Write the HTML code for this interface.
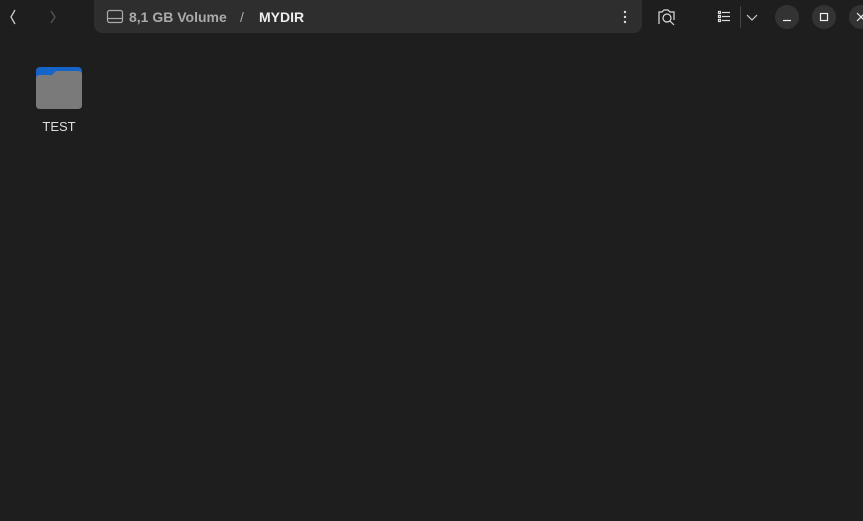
<!DOCTYPE html>
<html><head><style>
body{margin:0;width:863px;height:521px;background:#1e1e1e;overflow:hidden;font-family:"Liberation Sans",sans-serif;position:relative}
.a{position:absolute}
.bar{left:94px;top:0;width:548px;height:33px;background:#2e2e2e;border-radius:0 0 8px 8px}
</style></head><body>
<svg class="a" style="left:0;top:0" width="863" height="40">
<path d="M15 10 L11 17 L15 24" stroke="#ccc" stroke-width="1.3" fill="none"/>
<path d="M51 11 L55 17 L51 23" stroke="#555" stroke-width="1.3" fill="none"/>
</svg>
<div class="a bar"></div>
<svg class="a" style="left:0;top:0" width="863" height="40">
<rect x="107.5" y="10.5" width="15" height="12" rx="2" stroke="#aaa" fill="none" stroke-width="1.2"/>
<line x1="108" y1="18.5" x2="122" y2="18.5" stroke="#aaa" stroke-width="1.2"/>
<circle cx="625" cy="12" r="1.2" fill="#ddd"/><circle cx="625" cy="17" r="1.2" fill="#ddd"/><circle cx="625" cy="22" r="1.2" fill="#ddd"/>
<path d="M659 24 V12 h3 l2-2 h4 l2 2 h4 v8" stroke="#ddd" fill="none" stroke-width="1.2"/>
<circle cx="667" cy="18" r="4" stroke="#ddd" fill="none" stroke-width="1.2"/>
<line x1="670" y1="21" x2="674" y2="25" stroke="#ddd" stroke-width="1.2"/>
<g stroke="#ddd" stroke-width="1.2"><rect x="718.5" y="11.5" width="2" height="2" fill="none"/><rect x="718.5" y="15.5" width="2" height="2" fill="none"/><rect x="718.5" y="19.5" width="2" height="2" fill="none"/>
<line x1="722" y1="12.5" x2="730" y2="12.5"/><line x1="722" y1="16.5" x2="730" y2="16.5"/><line x1="722" y1="20.5" x2="730" y2="20.5"/></g>
<line x1="740.5" y1="6" x2="740.5" y2="28" stroke="#444"/>
<path d="M747 15 L752 20 L757 15" stroke="#ccc" fill="none" stroke-width="1.2"/>
<circle cx="787" cy="17" r="12" fill="#333"/><circle cx="824" cy="17" r="12" fill="#333"/><circle cx="861" cy="17" r="12" fill="#333"/>
<line x1="783" y1="20.5" x2="791" y2="20.5" stroke="#eee" stroke-width="1.2"/>
<rect x="820.5" y="13.5" width="7" height="7" stroke="#eee" fill="none" stroke-width="1.2"/>
<path d="M857 13 L865 21 M865 13 L857 21" stroke="#eee" stroke-width="1.2"/>
</svg>
<svg class="a" style="left:0;top:0" width="120" height="120">
<rect x="36" y="67" width="46" height="38" rx="4" fill="#1565c8"/>
<path d="M36 79 Q36 75 40 75 H52 L56 71 H78 Q82 71 82 75 V105 Q82 109 78 109 H40 Q36 109 36 105 Z" fill="#7a7a7a"/>
</svg>
<div class="a" style="left:129px;top:9px;font-size:14px;color:#aaa;font-weight:bold">8,1 GB Volume</div>
<div class="a" style="left:240px;top:9px;font-size:14px;color:#aaa">/</div>
<div class="a" style="left:259px;top:9px;font-size:14px;color:#eee;font-weight:bold">MYDIR</div>
<div class="a" style="left:30px;width:58px;text-align:center;top:119px;font-size:13px;color:#ddd">TEST</div>
</body></html>
